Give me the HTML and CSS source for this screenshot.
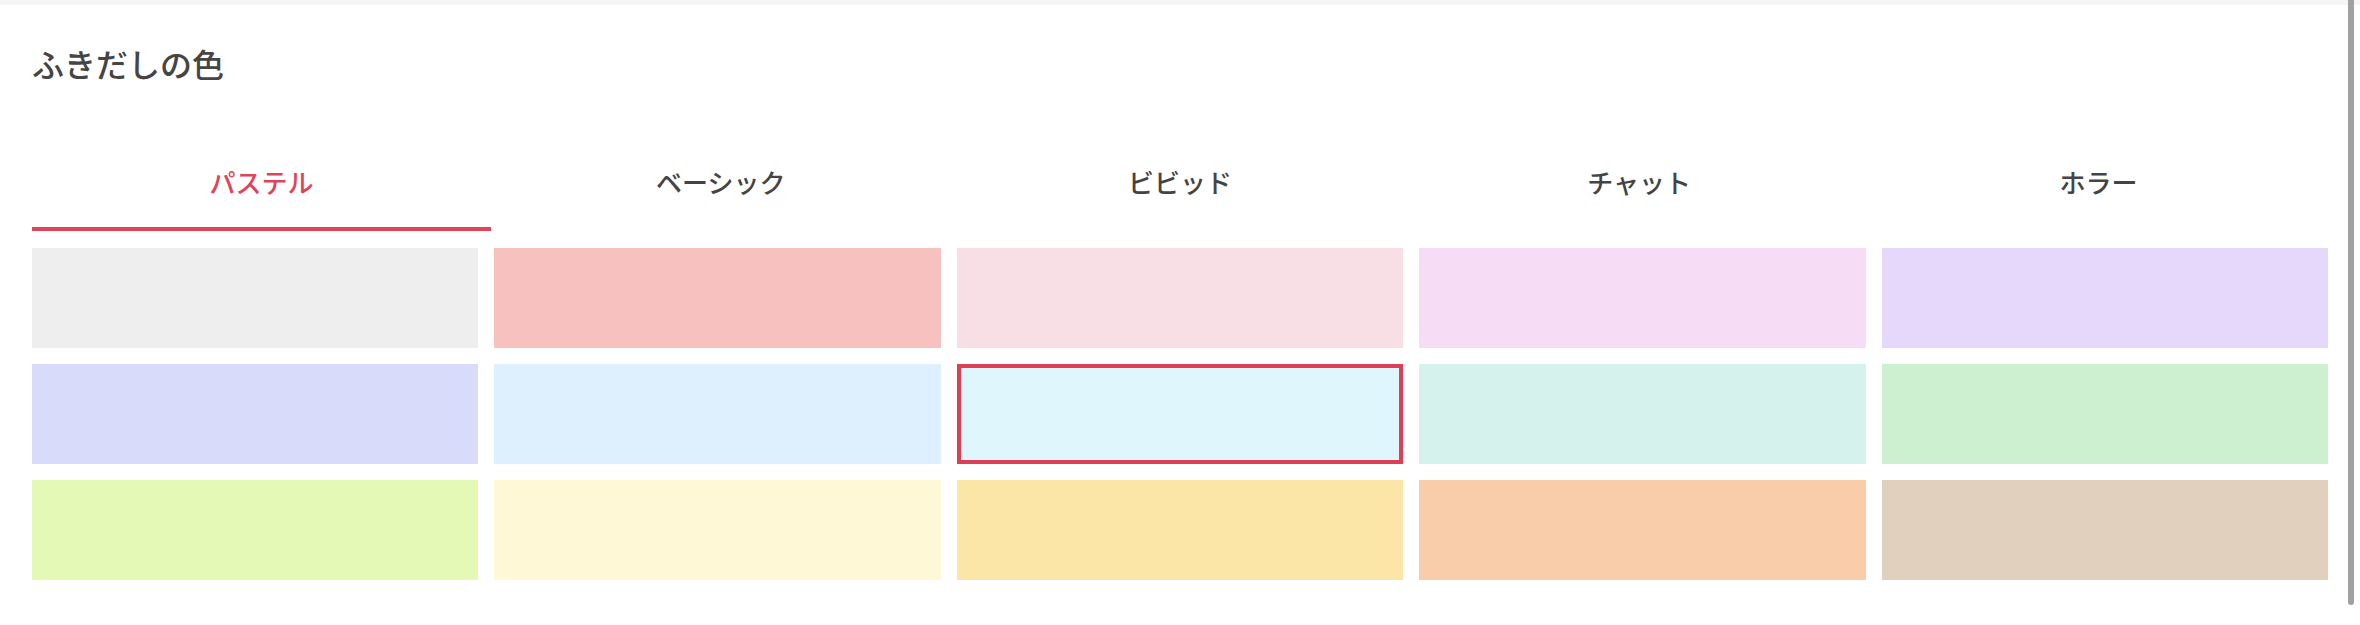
FILE: index.html
```html
<!DOCTYPE html>
<html lang="ja">
<head>
<meta charset="utf-8">
<title>ふきだしの色</title>
<link rel="stylesheet" href="styles.css">
</head>
<body>
<div class="page">
  <div class="topbar"></div>
  <section class="panel">
    <h2 class="title">ふきだしの色</h2>
    <nav class="tabs">
      <div class="tab active">パステル</div>
      <div class="tab">ベーシック</div>
      <div class="tab">ビビッド</div>
      <div class="tab">チャット</div>
      <div class="tab">ホラー</div>
    </nav>
    <div class="swatches">
      <div class="sw c1"></div>
      <div class="sw c2"></div>
      <div class="sw c3"></div>
      <div class="sw c4"></div>
      <div class="sw c5"></div>
      <div class="sw c6"></div>
      <div class="sw c7"></div>
      <div class="sw c8 selected"></div>
      <div class="sw c9"></div>
      <div class="sw c10"></div>
      <div class="sw c11"></div>
      <div class="sw c12"></div>
      <div class="sw c13"></div>
      <div class="sw c14"></div>
      <div class="sw c15"></div>
    </div>
  </section>
  <div class="scrollbar"></div>
</div>
</body>
</html>
```

FILE: styles.css
```css
html, body {
  margin: 0;
  padding: 0;
  background: #ffffff;
}
.page {
  position: relative;
  width: 2360px;
  height: 625px;
  overflow: hidden;
  font-family: "Noto Sans CJK JP", "Noto Sans", sans-serif;
  color: #444444;
}
.topbar {
  height: 5px;
  background: #f5f5f5;
}
.panel {
  width: 2296px;
  padding: 0 32px;
}
.title {
  margin: 0;
  padding-top: 40px;
  font-size: 32px;
  line-height: 36px;
  font-weight: 500;
  color: #454545;
}
.tabs {
  display: grid;
  grid-template-columns: repeat(5, 1fr);
  margin-top: 86px;
}
.tab {
  text-align: center;
  font-size: 26px;
  font-weight: 500;
  line-height: 30px;
  padding-bottom: 30px;
  border-bottom: 4px solid transparent;
  color: #444444;
}
.tab.active {
  color: #e0445a;
  border-bottom-color: #e0445a;
}
.swatches {
  display: grid;
  grid-template-columns: repeat(5, 1fr);
  grid-auto-rows: 100px;
  gap: 16px;
  margin-top: 17px;
}
.sw { box-sizing: border-box; }
.sw.selected { border: 4px solid #dc3f56; }
.c1 { background: #eeeeee; }
.c2 { background: #f6c1be; }
.c3 { background: #f8dee5; }
.c4 { background: #f6dcf5; }
.c5 { background: #e6d8fb; }
.c6 { background: #d9dbfb; }
.c7 { background: #def0fd; }
.c8 { background: #dff7fc; }
.c9 { background: #d6f2ec; }
.c10 { background: #cdf0d1; }
.c11 { background: #e4f9b5; }
.c12 { background: #fef8d6; }
.c13 { background: #fbe6a8; }
.c14 { background: #facdaa; }
.c15 { background: #e0d0bd; }
.scrollbar {
  position: absolute;
  top: 0;
  right: 6px;
  width: 6px;
  height: 605px;
  background: #a0a0a0;
  border-radius: 0 0 3px 3px;
}
```
